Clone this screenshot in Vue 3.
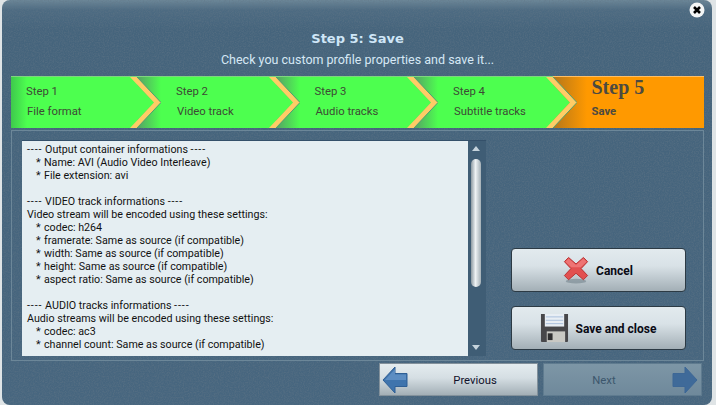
<template>
  <div class="screen">
    <div class="window">
      <svg class="grain" aria-hidden="true">
        <filter id="grain-noise">
          <feTurbulence type="fractalNoise" baseFrequency="0.8" numOctaves="2" seed="4" />
          <feColorMatrix values="0 0 0 0 0.12  0 0 0 0 0.18  0 0 0 0 0.24  1.1 0 0 0 -0.42" />
        </filter>
        <rect width="100%" height="100%" filter="url(#grain-noise)" />
      </svg>

      <button class="close" aria-label="Close">
        <svg viewBox="0 0 16 16" width="16" height="16">
          <circle cx="8" cy="8" r="7.500" fill="#f4f6f6" />
          <path d="M5 5l6 6M11 5l-6 6" stroke="#000" stroke-width="2.600" />
        </svg>
      </button>

      <header class="head">
        <h1>Step 5: Save</h1>
        <p>Check you custom profile properties and save it...</p>
      </header>

      <nav class="steps">
        <div
          v-for="(s, i) in steps"
          :key="s.title"
          class="step"
          :class="{ first: i === 0, active: i === 4 }"
        >
          <div class="step-title">{{ s.title }}</div>
          <div class="step-name">{{ s.name }}</div>
          <svg v-if="i < 4" class="chevron" viewBox="0 0 31 51" width="31" height="51">
            <path d="M0 0L24 25.500 0 51z" fill="#4dff4f" />
            <path d="M0 0H7L31 25.500 7 51H0L24 25.500z" fill="#ffcc66" />
            <path d="M7 0L31 25.500 7 51" fill="none" stroke="#4f9f70" stroke-width="1" />
          </svg>
        </div>
      </nav>

      <section class="panel">
        <div class="log">
          <div class="log-text">
            <div v-for="(line, i) in lines" :key="i" class="log-line" :class="{ bullet: line.startsWith('*') }">
              <template v-if="line.startsWith('----')">
                <span class="dash">----</span> {{ line.slice(5, -5) }} <span class="dash">----</span>
              </template>
              <template v-else-if="line.startsWith('*')">
                <span class="star">*</span>{{ line.slice(2) }}
              </template>
              <template v-else>{{ line }}</template>
            </div>
          </div>
          <div class="scroll">
            <span class="arrow up"></span>
            <span class="thumb"></span>
            <span class="arrow down"></span>
          </div>
        </div>

        <div class="actions">
          <button class="big-btn">
            <svg viewBox="0 0 28 30" width="26" height="28">
              <ellipse cx="14" cy="27" rx="11" ry="2.500" fill="#6f7f88" opacity=".55" />
              <path d="M6 1.500L14 8.500 22 1.500 26.500 6 19.500 13.500 26.500 21 22 25.500 14 18.500 6 25.500 1.500 21 8.500 13.500 1.500 6z" fill="#e25050" stroke="#b52c2c" />
              <path d="M6 2.500L14 9.500 22 2.500 25.500 6 19 12H9L2.500 6z" fill="#ee7474" />
            </svg>
            <span>Cancel</span>
          </button>
          <button class="big-btn">
            <svg viewBox="0 0 30 31" width="29" height="30">
              <path d="M1 1H29V29a1 1 0 0 1-1 1H2a1 1 0 0 1-1-1z" fill="#47474a" />
              <rect x="5" y="1" width="20" height="13" fill="#e8eef4" />
              <path d="M6 4H24M6 7.500H24M6 11H24" stroke="#a9bfdc" stroke-width="1" />
              <rect x="7" y="19" width="19" height="11" fill="#c9c9c4" />
              <rect x="8" y="21" width="5" height="7" fill="#2f2f31" />
            </svg>
            <span>Save and close</span>
          </button>
        </div>
      </section>

      <footer class="nav">
        <button class="nav-btn">
          <svg viewBox="0 0 26 28" width="26" height="28">
            <path d="M13 1V7.500H25V20.500H13V27L1 14z" fill="#3f74ad" stroke="#2f5f95" />
            <path d="M13 3V8.500H24V14H3z" fill="#5c8dc2" />
          </svg>
          <span class="prev-label">Previous</span>
        </button>
        <button class="nav-btn disabled">
          <span class="next-label">Next</span>
          <svg viewBox="0 0 26 28" width="26" height="28">
            <path d="M13 1V7.500H1V20.500H13V27L25 14z" fill="#3f6a99" stroke="#3d6796" />
          </svg>
        </button>
      </footer>
    </div>
  </div>
</template>

<script setup>
const steps = [
  { title: 'Step 1', name: 'File format' },
  { title: 'Step 2', name: 'Video track' },
  { title: 'Step 3', name: 'Audio tracks' },
  { title: 'Step 4', name: 'Subtitle tracks' },
  { title: 'Step 5', name: 'Save' }
]

const lines = [
  '---- Output container informations ----',
  '* Name: AVI (Audio Video Interleave)',
  '* File extension: avi',
  '',
  '---- VIDEO track informations ----',
  'Video stream will be encoded using these settings:',
  '* codec: h264',
  '* framerate: Same as source (if compatible)',
  '* width: Same as source (if compatible)',
  '* height: Same as source (if compatible)',
  '* aspect ratio: Same as source (if compatible)',
  '',
  '---- AUDIO tracks informations ----',
  'Audio streams will be encoded using these settings:',
  '* codec: ac3',
  '* channel count: Same as source (if compatible)'
]
</script>

<style>
html,
body {
  margin: 0;
  background: #dfe4e6;
  overflow: hidden;
}
</style>

<style scoped>
.screen {
  width: 716px;
  height: 405px;
  padding: 0 4px 0 2px;
  box-sizing: border-box;
  font-family: Roboto, "Liberation Sans", sans-serif;
}

.window {
  position: relative;
  height: 405px;
  padding: 0 8px 0 9px;
  box-sizing: border-box;
  border-radius: 8px;
  overflow: hidden;
  background: linear-gradient(#6c8798 0, #4d6b82 10px, #45647c 30px, #47667f 100%);
}

.grain {
  position: absolute;
  inset: 0;
  width: 100%;
  height: 100%;
}

.close {
  position: absolute;
  top: 2px;
  right: 7px;
  width: 16px;
  height: 16px;
  padding: 0;
  border: 0;
  background: none;
}

.head {
  position: relative;
  height: 76px;
  padding-top: 30px;
  box-sizing: border-box;
  text-align: center;
  color: #d6e8f5;
}

.head h1 {
  margin: 0;
  height: 19px;
  font: bold 13px/18px "DejaVu Sans", sans-serif;
  color: #cfe6f7;
}

.head p {
  margin: 3px 0 0;
  font: 12.500px/16px Roboto, sans-serif;
}

.steps {
  position: relative;
  display: flex;
  height: 51px;
  border-top: 1px solid #7fd67f;
  box-sizing: content-box;
}

.step {
  position: relative;
  width: 138.500px;
  padding-left: 39px;
  box-sizing: border-box;
  color: #3d4a35;
  font-size: 11.300px;
  background: linear-gradient(90deg, #56a165, #4dff4f 24px);
}

.step.first {
  width: 126px;
  padding-left: 15px;
  background: linear-gradient(90deg, #3fc84d, #4dff4f 16px);
}

.step.active {
  flex: 1;
  padding-left: 39px;
  border-top: 1px solid #ffbf66;
  margin-top: -1px;
  background: linear-gradient(90deg, #b5761a, #ff9900 34px);
}

.step-title {
  padding-top: 8px;
  line-height: 14px;
}

.step-name {
  padding-top: 6px;
  padding-left: 1px;
  line-height: 14px;
}

.step.active .step-title {
  margin-top: -1px;
  padding-top: 0;
  color: #4c4a40;
  font: bold 20px/22px "Liberation Serif", serif;
}

.step.active .step-name {
  padding-top: 7px;
  padding-left: 0;
  color: #4c4a40;
  font-weight: bold;
}

.chevron {
  position: absolute;
  top: 0;
  right: -24px;
  z-index: 1;
}

.panel {
  position: relative;
  display: flex;
  height: 231px;
  margin-top: 2px;
  padding: 9px 0 0 10px;
  box-sizing: border-box;
  border: 1px solid #6c8799;
}

.log {
  display: flex;
  width: 464px;
  height: 215px;
  border-top: 1px solid #34506a;
}

.log-text {
  width: 446px;
  padding: 2px 0 0 5px;
  box-sizing: border-box;
  overflow: hidden;
  background: #e5eef2;
  color: #111;
  font-size: 10.700px;
  line-height: 13px;
}

.log-line {
  height: 13px;
  white-space: pre;
}

.log-line.bullet {
  padding-left: 9px;
}

.dash {
  letter-spacing: 0.900px;
}

.star {
  display: inline-block;
  width: 8px;
}

.scroll {
  position: relative;
  width: 18px;
  background: #3f5d75;
}

.arrow {
  position: absolute;
  left: 4px;
  width: 0;
  height: 0;
  border-left: 4px solid transparent;
  border-right: 4px solid transparent;
}

.arrow.up {
  top: 5px;
  border-bottom: 5px solid #c5d3dc;
}

.arrow.down {
  bottom: 6px;
  border-top: 5px solid #c5d3dc;
}

.thumb {
  position: absolute;
  top: 18px;
  left: 3px;
  width: 10px;
  height: 128px;
  border-radius: 5px;
  background: linear-gradient(90deg, #8d9aa2, #eef2f4 45%, #a3afb6);
}

.actions {
  display: flex;
  flex-direction: column;
  gap: 14px;
  margin: 108px 0 0 25px;
}

.big-btn {
  display: flex;
  align-items: center;
  justify-content: center;
  gap: 7px;
  width: 175px;
  height: 44px;
  padding: 0 1px 0 0;
  border: 1px solid #2c3a44;
  border-radius: 4px;
  background: linear-gradient(#e2eaee, #d9e2e7 40%, #a3afb6);
  color: #0a0a14;
  font: bold 12px Roboto, sans-serif;
}

.big-btn span {
  padding-top: 1px;
}

.nav {
  position: relative;
  display: flex;
  justify-content: flex-end;
  gap: 5px;
  margin-top: 2px;
  padding-right: 2px;
}

.nav-btn {
  display: flex;
  align-items: center;
  width: 159px;
  height: 33px;
  padding: 0 3px 0 2px;
  box-sizing: border-box;
  border: 1px solid #83919b;
  background: linear-gradient(#e4ecef, #d5dee3 45%, #a3afb6);
  color: #10102a;
  font: 11.300px Roboto, sans-serif;
}

.nav-btn span {
  flex: 1;
  padding-top: 2px;
  text-align: center;
}

.prev-label {
  padding-left: 8px;
}

.next-label {
  padding-right: 10px;
}

.nav-btn.disabled {
  border-color: #5f7b8f;
  background: linear-gradient(#7d96a6, #6f899b);
  color: #3c566c;
}
</style>
